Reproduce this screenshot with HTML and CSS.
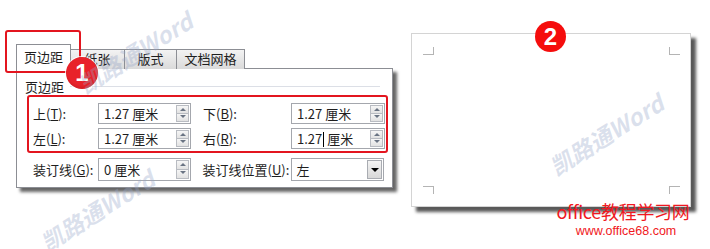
FILE: index.html
```html
<!DOCTYPE html>
<html lang="zh-CN">
<head>
  <meta charset="UTF-8" />
  <title>页面设置 - 页边距</title>
  <link rel="stylesheet" href="styles.css">
</head>
<body>
  <div class="screen">
    <div class="stage">
      <div class="dialog">
        <div class="tabs">
          <div class="tab active">页边距</div>
          <div class="tab w55">纸张</div>
          <div class="tab w52">版式</div>
          <div class="tab w68">文档网格</div>
        </div>
        <div class="panel">
          <div class="group_title"><span>页边距</span><i></i></div>

          <div class="highlight">
            <div class="row">
              <label class="lbl">上(<u>T</u>):</label>
              <div class="field"><span class="val">1.27 厘米</span><span class="spin"><b class="up"></b><b class="down"></b></span></div>
              <label class="lbl lbl2">下(<u>B</u>):</label>
              <div class="field wide"><span class="val">1.27 厘米</span><span class="spin"><b class="up"></b><b class="down"></b></span></div>
            </div>
            <div class="row">
              <label class="lbl">左(<u>L</u>):</label>
              <div class="field"><span class="val">1.27 厘米</span><span class="spin"><b class="up"></b><b class="down"></b></span></div>
              <label class="lbl lbl2">右(<u>R</u>):</label>
              <div class="field wide"><span class="val">1.27<i class="caret"></i>厘米</span><span class="spin"><b class="up"></b><b class="down"></b></span></div>
            </div>
          </div>

          <div class="row row_gutter">
            <label class="lbl">装订线(<u>G</u>):</label>
            <div class="field"><span class="val">0 厘米</span><span class="spin"><b class="up"></b><b class="down"></b></span></div>
            <label class="lbl lbl2">装订线位置(<u>U</u>):</label>
            <div class="field wide select"><span class="val">左</span><span class="drop"><b></b></span></div>
          </div>
        </div>
      </div>

      <div class="page">
        <span class="mark tl"></span>
        <span class="mark tr"></span>
        <span class="mark bl"></span>
        <span class="mark br"></span>
      </div>
    </div>

    <!-- marcas por cima da imagem -->
    <div class="tab_box"></div>
    <div class="badge badge1">1</div>
    <div class="badge badge2">2</div>

    <div class="wm wm1">凯路通Word</div>
    <div class="wm wm2">凯路通Word</div>
    <div class="wm wm3">凯路通Word</div>

    <div class="site">
      <div class="site_name">office教程学习网</div>
      <div class="site_url">www.office68.com</div>
    </div>
  </div>
</body>
</html>
```

FILE: styles.css
```css
html, body {
  margin: 0;
  overflow: hidden;
}
body {
  background: #fff;
  font-family: "Noto Sans CJK SC", "Noto Sans", sans-serif;
  font-size: 13px;
  color: #1e1e1e;
}
.screen {
  width: 710px;
  height: 249px;
  overflow: hidden;
  position: relative;
}
.stage {
  display: flex;
  align-items: flex-start;
}
.dialog {
  margin-left: 16px;
  margin-top: 44px;
  width: 377px;
}
.tabs {
  display: flex;
  align-items: flex-end;
  height: 25px;
  margin-bottom: -1px;
  position: relative;
  z-index: 2;
}
.tab {
  box-sizing: border-box;
  height: 20px;
  line-height: 18px;
  text-align: center;
  border: 1px solid #8c8e94;
  border-bottom: none;
  border-left: none;
  background: linear-gradient(#f3f3f3, #dadada);
}
.tab.active {
  width: 55px;
  height: 25px;
  line-height: 24px;
  background: #fff;
  border-left: 1px solid #8c8e94;
}
.w55 { width: 54px; }
.w52 { width: 52px; }
.w68 { width: 68px; }
.panel {
  box-sizing: border-box;
  height: 120px;
  border: 1px solid #8c8e94;
  background: #fff;
  padding: 9px 8px 0 8px;
  box-shadow: 4px 4px 3px rgba(0, 0, 0, 0.6);
}
.group_title {
  display: flex;
  align-items: center;
  height: 17px;
  line-height: 17px;
}
.group_title i {
  flex: 1;
  height: 1px;
  margin-left: 6px;
  margin-right: 4px;
  background: #dcdfe6;
}
.highlight {
  margin-left: 2px;
  margin-right: -4px;
  border: 2px solid #e3151f;
  border-radius: 3px;
  padding: 6px 1px 2px 4px;
}
.row {
  display: flex;
  align-items: center;
  height: 21px;
  margin-bottom: 4px;
}
.row:last-child {
  margin-bottom: 0;
}
.row_gutter {
  height: 23px;
  margin-top: 5px;
  margin-left: 8px;
}
.lbl {
  width: 65px;
  flex: none;
}
.lbl2 {
  width: 88px;
  margin-left: 12px;
}
.lbl u {
  text-decoration: underline;
  text-underline-offset: 1px;
}
.field {
  box-sizing: border-box;
  width: 93px;
  height: 100%;
  border: 1px solid #a4a7ad;
  display: flex;
  align-items: center;
  background: #fff;
}
.field.wide {
  width: 94px;
}
.val {
  flex: 1;
  padding-left: 5px;
  white-space: nowrap;
}
.caret {
  display: inline-block;
  width: 1px;
  height: 15px;
  background: #000;
  vertical-align: -3px;
  margin: 0 3px 0 1px;
}
.spin {
  width: 13px;
  height: calc(100% - 2px);
  margin-right: 1px;
  display: flex;
  flex-direction: column;
}
.spin b {
  flex: 1;
  position: relative;
  border: 1px solid #b9bcc2;
  background: linear-gradient(#f6f6f6, #e2e2e2);
}
.spin b + b {
  border-top: none;
}
.spin b::after {
  content: "";
  position: absolute;
  left: 3px;
  top: 2px;
  border-left: 3px solid transparent;
  border-right: 3px solid transparent;
}
.spin .up::after {
  border-bottom: 3px solid #6a7483;
}
.spin .down::after {
  top: 1px;
  border-top: 3px solid #6a7483;
}
.drop {
  width: 15px;
  height: calc(100% - 2px);
  margin-right: 1px;
  border: 1px solid #a9acb2;
  box-sizing: border-box;
  background: linear-gradient(#f4f4f4, #d8d8d8);
  display: flex;
  align-items: center;
  justify-content: center;
}
.drop b {
  border-left: 4px solid transparent;
  border-right: 4px solid transparent;
  border-top: 4px solid #000;
}
.page {
  box-sizing: border-box;
  position: relative;
  margin-left: 18px;
  margin-top: 33px;
  width: 280px;
  height: 174px;
  border: 1px solid #d4d4d4;
  background: #fff;
  box-shadow: 5px 5px 3px rgba(0, 0, 0, 0.65);
}
.mark {
  position: absolute;
  width: 10px;
  height: 7px;
  border: 0 solid #b4b4b4;
}
.mark.tl { left: 11px; top: 13px; border-right-width: 1px; border-bottom-width: 1px; }
.mark.tr { left: 257px; top: 13px; border-left-width: 1px; border-bottom-width: 1px; }
.mark.bl { left: 11px; top: 152px; border-right-width: 1px; border-top-width: 1px; }
.mark.br { left: 257px; top: 152px; border-left-width: 1px; border-top-width: 1px; }

.tab_box {
  position: absolute;
  left: 5px;
  top: 30px;
  width: 72px;
  height: 39px;
  border: 2px solid #e3151f;
  border-radius: 3px;
  z-index: 3;
}
.badge {
  position: absolute;
  width: 32px;
  height: 32px;
  border-radius: 50%;
  color: #fff;
  font-family: "Liberation Sans", Arial, sans-serif;
  font-weight: bold;
  font-size: 24px;
  line-height: 32px;
  text-align: center;
  z-index: 4;
}
.badge1 {
  left: 66px;
  top: 57px;
  background: radial-gradient(circle at 50% 40%, #e8222a 60%, #b5141a 100%);
  box-shadow: 0 0 0 1px rgba(255, 255, 255, 0.8);
}
.badge2 {
  left: 535px;
  top: 21px;
  width: 31px;
  height: 31px;
  line-height: 31px;
  background: #f50d0d;
}
.wm {
  position: absolute;
  white-space: nowrap;
  font-family: "Noto Sans CJK SC", sans-serif;
  font-weight: bold;
  font-style: italic;
  font-size: 23px;
  color: rgba(150, 165, 200, 0.34);
  transform: translate(-50%, -50%) rotate(-32deg);
  z-index: 5;
  pointer-events: none;
}
.wm1 { left: 135px; top: 52px; }
.wm2 { left: 97px; top: 210px; }
.wm3 { left: 606px; top: 134px; }
.site {
  position: absolute;
  left: 553px;
  top: 199px;
  width: 140px;
  color: #f01822;
  text-align: center;
  z-index: 6;
}
.site_name {
  font-family: "Noto Sans CJK SC", sans-serif;
  font-size: 18px;
  line-height: 24px;
  letter-spacing: -0.3px;
}
.site_url {
  font-family: "Liberation Sans", Arial, sans-serif;
  font-size: 12.5px;
  line-height: 14px;
  margin-top: 1px;
  padding-left: 6px;
}
```
